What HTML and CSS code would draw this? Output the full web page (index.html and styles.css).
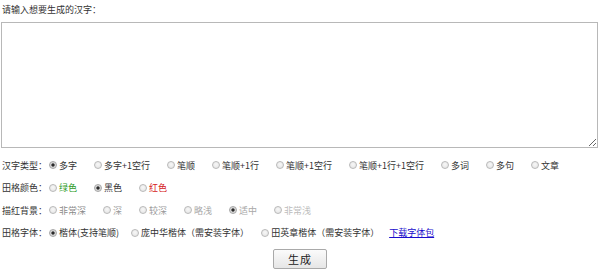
FILE: index.html
```html
<!DOCTYPE html>
<html lang="zh-CN">
<head>
<meta charset="utf-8">
<title>田字格生成</title>
<link rel="stylesheet" href="styles.css">
</head>
<body>
<form class="page">
  <div class="title">请输入想要生成的汉字：</div>
  <textarea class="input"></textarea>

  <div class="row">
    <span class="label">汉字类型：</span>
    <label class="opt"><input type="radio" name="t" checked><span>多字</span></label>
    <label class="opt"><input type="radio" name="t"><span>多字+1空行</span></label>
    <label class="opt"><input type="radio" name="t"><span>笔顺</span></label>
    <label class="opt"><input type="radio" name="t"><span>笔顺+1行</span></label>
    <label class="opt"><input type="radio" name="t"><span>笔顺+1空行</span></label>
    <label class="opt"><input type="radio" name="t"><span>笔顺+1行+1空行</span></label>
    <label class="opt"><input type="radio" name="t"><span>多词</span></label>
    <label class="opt"><input type="radio" name="t"><span>多句</span></label>
    <label class="opt"><input type="radio" name="t"><span>文章</span></label>
  </div>

  <div class="row">
    <span class="label">田格颜色：</span>
    <label class="opt"><input type="radio" name="c"><span class="green">绿色</span></label>
    <label class="opt"><input type="radio" name="c" checked><span>黑色</span></label>
    <label class="opt"><input type="radio" name="c"><span class="red">红色</span></label>
  </div>

  <div class="row">
    <span class="label">描红背景：</span>
    <label class="opt"><input type="radio" name="b"><span class="g1">非常深</span></label>
    <label class="opt"><input type="radio" name="b"><span class="g2">深</span></label>
    <label class="opt"><input type="radio" name="b"><span class="g2">较深</span></label>
    <label class="opt"><input type="radio" name="b"><span class="g3">略浅</span></label>
    <label class="opt"><input type="radio" name="b" checked><span class="g3">适中</span></label>
    <label class="opt"><input type="radio" name="b"><span class="g4">非常浅</span></label>
  </div>

  <div class="row fonts">
    <span class="label">田格字体：</span>
    <label class="opt"><input type="radio" name="f" checked><span>楷体(支持笔顺)</span></label>
    <label class="opt"><input type="radio" name="f"><span>庞中华楷体（需安装字体）</span></label>
    <label class="opt"><input type="radio" name="f"><span>田英章楷体（需安装字体）</span></label>
    <a class="dl" href="#">下载字体包</a>
  </div>

  <div class="actions">
    <button type="button" class="btn">生成</button>
  </div>
</form>
</body>
</html>
```
FILE: styles.css
```css
html, body {
  margin: 0;
  padding: 0;
  background: #fff;
}

.page {
  font-family: "Noto Sans CJK SC", "Noto Sans", sans-serif;
  font-size: 9px;
  color: #333;
  padding: 0 0 0 2px;
  width: 598px;
}

.title {
  height: 22px;
  line-height: 20px;
}

.input {
  display: block;
  box-sizing: border-box;
  width: 597px;
  height: 126px;
  margin: 0 0 0 -1px;
  border: 1px solid #b8b8b8;
  padding: 2px;
  font: inherit;
  background: #fff;
  outline: none;
}

.row {
  display: flex;
  align-items: center;
  height: 22.5px;
  gap: 17px;
  white-space: nowrap;
}

.row.fonts {
  gap: 12px;
}

.input + .row {
  margin-top: 6px;
}

.label {
  margin-right: -15px;
}

.row.fonts .label {
  margin-right: -10px;
}

.opt {
  display: flex;
  align-items: center;
  gap: 2px;
}

.opt input {
  -webkit-appearance: none;
  appearance: none;
  box-sizing: border-box;
  width: 8px;
  height: 8px;
  margin: 0;
  border: 1px solid #b9b9b9;
  border-radius: 50%;
  background: radial-gradient(circle at 50% 40%, #f7f7f7 0, #e2e2e2 100%);
}

.opt input:checked {
  background: radial-gradient(circle, #2a2a2a 0, #2a2a2a 1.3px, #cfcfcf 1.9px, #ececec 100%);
  border-color: #a6a6a6;
}

.green { color: #2c9a1e; }
.red { color: #d52020; }
.g1 { color: #8a8a8a; }
.g2 { color: #9a9a9a; }
.g3 { color: #a8a8a8; }
.g4 { color: #bcbcbc; }

.dl {
  color: #1a0dcc;
  text-decoration: underline;
  margin-left: -2px;
}

.actions {
  display: flex;
  justify-content: center;
  margin-top: 5px;
  padding-right: 2px;
}

.btn {
  box-sizing: border-box;
  width: 54px;
  height: 20px;
  padding: 0;
  border: 1px solid #a9a9a9;
  border-radius: 2px;
  background: linear-gradient(#fbfbfb, #e6e6e6);
  font-family: "Noto Sans CJK SC", sans-serif;
  font-size: 11px;
  letter-spacing: 1px;
  color: #222;
}
```
